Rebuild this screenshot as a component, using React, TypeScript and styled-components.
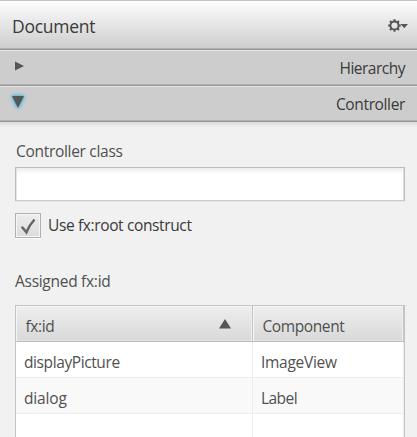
import React from 'react';
import styled, { createGlobalStyle } from 'styled-components';

const Global = createGlobalStyle`
  *, *::before, *::after { box-sizing: border-box; }
  html, body { margin: 0; height: 100%; overflow: hidden; }
  body { background: #f1f1f1; }
`;

const Panel = styled.div`
  width: 417px;
  height: 437px;
  overflow: hidden;
  display: flex;
  flex-direction: column;
  background: #f1f1f1;
  color: #3a3a3a;
  font: 15.5px/20px "Open Sans", "Noto Sans", sans-serif;
`;

const Text = styled.span<{ $tracking?: number }>`
  white-space: pre;
  letter-spacing: ${p => p.$tracking ?? -0.4}px;
`;

const Header = styled.header`
  height: 50px;
  flex: none;
  display: flex;
  align-items: center;
  justify-content: space-between;
  padding: 1px 9px 0 12px;
  border-top: 1px solid #c3c3c3;
  border-bottom: 1px solid #969696;
  background: linear-gradient(#fdfdfd, #cecece 47px, #b0b0b0 47px);
  font-size: 17.5px;
`;

const SectionBar = styled.div`
  height: 36px;
  flex: none;
  display: flex;
  align-items: center;
  justify-content: space-between;
  padding: 0 12px 0 11px;
  background: linear-gradient(#e6e6e6 1px, #cdcdcd 1px, #cdcdcd 34px, #b0b0b0 34px, #b0b0b0 35px, #989898 35px);
`;

const Arrow = styled.svg`
  display: block;
  overflow: visible;
  margin-top: -4px;
`;

const GlowArrow = styled(Arrow)`
  filter: drop-shadow(0 0 1px #2bb5e8) drop-shadow(0 0 2px #45b9e4);
`;

const Content = styled.main`
  flex: 1;
  display: flex;
  flex-direction: column;
  padding: 19px 12px 0 15px;
  color: #505050;
  background: linear-gradient(#d9d9d9, #ececec 4px, #f1f1f1 7px);
`;

const FieldLabel = styled.label`
  height: 20px;
  padding-left: 1px;
`;

const Input = styled.input`
  height: 34px;
  margin-top: 6px;
  width: 390px;
  padding: 4px 8px;
  border: 1px solid #bcbcbc;
  border-bottom-color: #cacaca;
  border-radius: 0;
  outline: none;
  background: linear-gradient(#ececec, #fff 6px);
  box-shadow: inset 1px 0 #e4e4e4, inset -1px 0 #dedede, 0 1px #e6e6e6;
`;

const CheckRow = styled.div`
  display: flex;
  align-items: center;
  gap: 7px;
  height: 26px;
  margin-top: 11px;
  color: #3a3a3a;
`;

const CheckBox = styled.span`
  width: 26px;
  height: 25px;
  border: 1px solid #b0b0b0;
  background: linear-gradient(#ededed, #dcdcdc);
  box-shadow: inset 0 0 0 1px #f6f6f6, 0 1px #fafafa;
`;

const TableLabel = styled.div`
  height: 20px;
  margin-top: 33px;
`;

const Table = styled.div`
  width: 390px;
  height: 150px;
  flex: none;
  margin-top: 14px;
  border: 1px solid #c4c4c4;
  background: #fff;
`;

const Row = styled.div<{ $alt?: boolean }>`
  display: grid;
  grid-template-columns: 237px 1fr;
  height: 36px;
  background: ${p => (p.$alt ? '#f9f9f9' : '#fff')};
`;

const Cell = styled.div`
  display: flex;
  align-items: center;
  padding: 4px 0 0 8px;
  border-right: 1px solid #ededed;
  border-bottom: 1px solid #ededed;
`;

const HeadRow = styled(Row)`
  background: linear-gradient(#eee, #d8d8d8);
`;

const HeadCell = styled(Cell)`
  justify-content: space-between;
  padding: 5px 21px 0 9.5px;
  border-right: 1px solid #c4c4c4;
  border-bottom: 1px solid #c0c0c0;
  box-shadow: inset 1px 1px #f6f6f6, inset -1px 0 #efefef, inset 0 -1px #e2e2e2;
`;

const SortArrow = styled.svg`
  display: block;
  margin-top: -4px;
`;

const GearMenu = () => (
  <svg width="20" height="14" viewBox="0 0 20 14" fill="none">
    <g stroke="#565656" strokeWidth="2">
      <circle cx="6.5" cy="6.5" r="4.1" />
      <path d="M6.5 .2v2M6.5 10.8v2M.2 6.5h2M10.8 6.5h2M2 2l1.5 1.5M9.5 9.5 11 11M2 11l1.5-1.5M9.5 3.5 11 2" />
    </g>
    <path d="M12.5 5h7.5L16.2 9.2z" fill="#565656" />
  </svg>
);

const rows = [
  { id: 'displayPicture', idT: -0.4, type: 'ImageView', typeT: -0.28 },
  { id: 'dialog', idT: -0.15, type: 'Label', typeT: -0.55 },
];

export default function App() {
  return (
    <Panel>
      <Global />
      <Header>
        <Text $tracking={-0.28}>Document</Text>
        <GearMenu />
      </Header>
      <SectionBar>
        <Arrow width="14" height="10" viewBox="0 0 14 10"><path d="M4 .5 13 5 4 9.5z" fill="#565656" /></Arrow>
        <Text $tracking={-0.5}>Hierarchy</Text>
      </SectionBar>
      <SectionBar>
        <GlowArrow width="14" height="12" viewBox="0 0 14 12"><path d="M1 0h12L7 12z" fill="#565656" /></GlowArrow>
        <Text $tracking={-0.36}>Controller</Text>
      </SectionBar>
      <Content>
        <FieldLabel htmlFor="controller-class"><Text $tracking={-0.3}>Controller class</Text></FieldLabel>
        <Input id="controller-class" />
        <CheckRow>
          <CheckBox>
            <svg width="23" height="23" viewBox="0 0 23 23" fill="none">
              <path d="M5.8 12.8 10.4 18.3Q13 11.5 18.5 5.5" stroke="#666" strokeWidth="2.5" />
            </svg>
          </CheckBox>
          <Text $tracking={-0.37}>Use fx:root construct</Text>
        </CheckRow>
        <TableLabel><Text $tracking={-0.28}>Assigned fx:id</Text></TableLabel>
        <Table>
          <HeadRow>
            <HeadCell>
              <Text>fx:id</Text>
              <SortArrow width="12" height="10" viewBox="0 0 12 10"><path d="M0 9.5h12L6 0z" fill="#565656" /></SortArrow>
            </HeadCell>
            <HeadCell><Text>Component</Text></HeadCell>
          </HeadRow>
          {rows.map((r, i) => (
            <Row key={r.id} $alt={i % 2 === 1}>
              <Cell><Text $tracking={r.idT}>{r.id}</Text></Cell>
              <Cell><Text $tracking={r.typeT}>{r.type}</Text></Cell>
            </Row>
          ))}
          <Row><Cell /><Cell /></Row>
        </Table>
      </Content>
    </Panel>
  );
}
